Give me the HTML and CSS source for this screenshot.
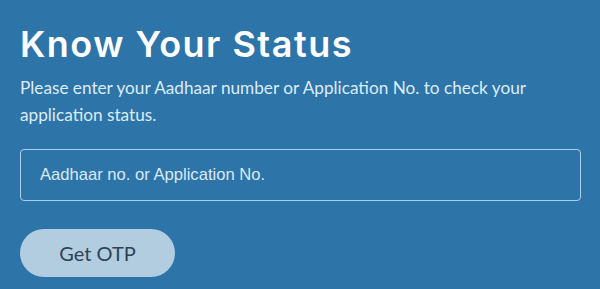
FILE: index.html
```html
<!DOCTYPE html>
<html lang="en">
<head>
<meta charset="utf-8">
<title>Know Your Status</title>
<link rel="stylesheet" href="styles.css">
</head>
<body>
<main class="panel">
  <h1 class="title">Know Your Status</h1>
  <p class="lead">Please enter your Aadhaar number or Application No. to check your application status.</p>
  <form class="form">
    <input class="field" type="text" placeholder="Aadhaar no. or Application No.">
    <button class="otp" type="button">Get OTP</button>
  </form>
</main>
</body>
</html>
```

FILE: styles.css
```css
html, body {
  margin: 0;
  padding: 0;
  background: #2d74a9;
}
.panel {
  width: 600px;
  height: 289px;
  box-sizing: border-box;
  padding: 22px 20px 0 20px;
  overflow: hidden;
}
.title {
  margin: 0;
  font-family: Inter, sans-serif;
  font-weight: 600;
  font-size: 36px;
  line-height: 44px;
  color: #ffffff;
  letter-spacing: 1.5px;
}
.lead {
  margin: 8px 0 0 0;
  font-family: Lato, sans-serif;
  font-size: 17.2px;
  line-height: 27px;
  color: #dcecf7;
  width: 560px;
}
.form {
  margin-top: 21px;
  display: flex;
  flex-direction: column;
  align-items: flex-start;
  gap: 28px;
}
.field {
  box-sizing: border-box;
  width: 561px;
  height: 52px;
  margin: 0;
  padding: 0 19px;
  border: 1px solid #a9d0ee;
  border-radius: 4px;
  background: transparent;
  font-family: "Liberation Sans", Arial, sans-serif;
  font-size: 16.6px;
  color: #ffffff;
  outline: none;
}
.field::placeholder {
  color: #d9e9f6;
  opacity: 1;
}
.otp {
  box-sizing: border-box;
  width: 155px;
  height: 48px;
  margin: 0;
  border: none;
  border-radius: 24px;
  background: #b2cce0;
  color: #2f4254;
  font-family: Lato, sans-serif;
  font-size: 20px;
  cursor: pointer;
}
```
